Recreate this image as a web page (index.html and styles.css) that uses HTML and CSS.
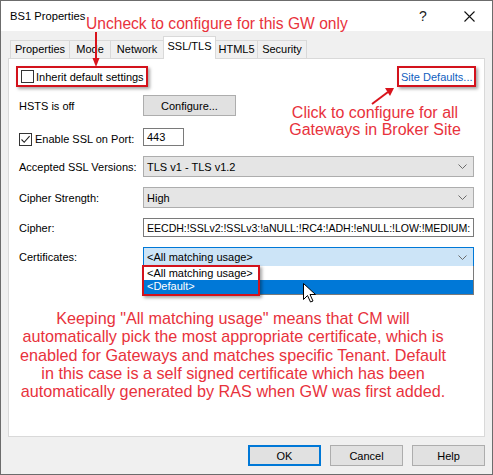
FILE: index.html
```html
<!DOCTYPE html>
<html>
<head>
<meta charset="utf-8">
<link rel="stylesheet" href="styles.css">
</head>
<body>
<div class="window">
  <div class="titlebar">
    <span class="title">BS1 Properties</span>
    <span class="tb-btn help">?</span>
    <span class="tb-btn"><svg width="11" height="11" viewBox="0 0 11 11"><path d="M0.5 0.5 L10.5 10.5 M10.5 0.5 L0.5 10.5" stroke="#111" stroke-width="1.1" fill="none"/></svg></span>
  </div>
  <div class="tabs">
    <div class="tab t-props">Properties</div>
    <div class="tab t-mode">Mode</div>
    <div class="tab t-net">Network</div>
    <div class="tab t-ssl active">SSL/TLS</div>
    <div class="tab t-html">HTML5</div>
    <div class="tab t-sec">Security</div>
  </div>
  <div class="panel">
    <div class="row-top">
      <div class="redbox inherit"><span class="cb"></span>Inherit default settings</div>
      <div class="redbox sitedef"><span class="link">Site Defaults...</span></div>
    </div>
    <div class="row hsts">
      <span class="label">HSTS is off</span>
      <div><span class="btn configure">Configure...</span></div>
    </div>
    <div class="row ssl">
      <span class="label"><span class="cb checked"><svg width="11" height="11" viewBox="0 0 11 11"><path d="M1.5 5.5 L4.2 8.3 L9.6 2.2" stroke="#222" stroke-width="1.1" fill="none"/></svg></span>Enable SSL on Port:</span>
      <div><span class="input port">443</span></div>
    </div>
    <div class="row r21">
      <span class="label">Accepted SSL Versions:</span>
      <div class="select"><span>TLS v1 - TLS v1.2</span><svg class="chev" width="9" height="5" viewBox="0 0 9 5"><path d="M0.5 0.5 L4.5 4.5 L8.5 0.5" stroke="#6b6b6b" fill="none"/></svg></div>
    </div>
    <div class="row r21">
      <span class="label">Cipher Strength:</span>
      <div class="select"><span>High</span><svg class="chev" width="9" height="5" viewBox="0 0 9 5"><path d="M0.5 0.5 L4.5 4.5 L8.5 0.5" stroke="#6b6b6b" fill="none"/></svg></div>
    </div>
    <div class="row r19">
      <span class="label">Cipher:</span>
      <div class="input cipher">EECDH:!SSLv2:!SSLv3:!aNULL:!RC4:!ADH:!eNULL:!LOW:!MEDIUM:</div>
    </div>
    <div class="row r20">
      <span class="label">Certificates:</span>
      <div class="select focus"><span>&lt;All matching usage&gt;</span><svg class="chev" width="9" height="5" viewBox="0 0 9 5"><path d="M0.5 0.5 L4.5 4.5 L8.5 0.5" stroke="#6b6b6b" fill="none"/></svg>
        <div class="dropdown">
          <div class="item">&lt;All matching usage&gt;</div>
          <div class="item sel">&lt;Default&gt;</div>
          <div class="dd-box"></div>
        </div>
      </div>
    </div>
    <p class="note">Keeping "All matching usage" means that CM will automatically pick the most appropriate certificate, which is enabled for Gateways and matches specific Tenant. Default in this case is a self signed certificate which has been automatically generated by RAS when GW was first added.</p>
  </div>
  <div class="footer">
    <span class="btn fbtn default">OK</span>
    <span class="btn fbtn">Cancel</span>
    <span class="btn fbtn">Help</span>
  </div>

  <div class="ann ann-title">Uncheck to configure for this GW only</div>
  <div class="ann ann-click">Click to configure for all<br>Gateways in Broker Site</div>
  <svg class="overlay" width="493" height="475" viewBox="0 0 493 475">
    <path d="M96 32 L96 60" stroke="#d9141c" stroke-width="2" fill="none"/>
    <path d="M92.5 58 L96 67 L99.5 58 Z" fill="#d9141c"/>
    <path d="M372 104 L388 92" stroke="#d9141c" stroke-width="2" fill="none"/>
    <path d="M385 88 L394 88 L390 96 Z" fill="#d9141c"/>
    <path d="M303.5 283.5 L303.5 299.5 L307.5 295.5 L310.5 302 L313 301 L310 294.5 L315.5 294.5 Z" fill="#fff" stroke="#000" stroke-width="1" stroke-linejoin="round"/>
  </svg>
</div>
</body>
</html>
```
FILE: styles.css
```css
body {
  margin: 0;
  width: 493px;
  height: 475px;
  overflow: hidden;
  font-family: "Liberation Sans", Arial, sans-serif;
  font-size: 11px;
  color: #000;
}
.window {
  position: relative;
  box-sizing: border-box;
  width: 493px;
  height: 475px;
  border: 1px solid #6c6c6c;
  background: #f0f0f0;
  display: flex;
  flex-direction: column;
}
.titlebar {
  height: 30px;
  flex: none;
  background: #fff;
  display: flex;
  align-items: center;
  padding-left: 9px;
  font-size: 11.2px;
}
.title { flex: 1; margin-top: -1px; }
.tb-btn {
  width: 46px;
  height: 30px;
  display: flex;
  align-items: center;
  justify-content: center;
}
.help { font-size: 14px; color: #222; }
.tabs {
  height: 27px;
  flex: none;
  display: flex;
  align-items: flex-end;
  padding-left: 9px;
}
.tab {
  height: 18px;
  box-sizing: border-box;
  border: 1px solid #d9d9d9;
  border-bottom: none;
  margin-right: -1px;
  line-height: 17px;
  text-align: center;
  background: #f0f0f0;
  flex: none;
}
.t-props { width: 60px; }
.t-mode { width: 42px; }
.t-net { width: 54px; }
.t-ssl { width: 53px; }
.t-html { width: 43px; }
.t-sec { width: 50px; }
.tab.active {
  position: relative;
  z-index: 2;
  height: 23px;
  margin-bottom: -1px;
  line-height: 19px;
  background: #fff;
}
.panel {
  position: relative;
  z-index: 1;
  height: 379px;
  flex: none;
  box-sizing: border-box;
  margin: 0 7px;
  background: #fff;
  border: 1px solid #d9d9d9;
  padding: 0 10px 0 7px;
}
.row-top {
  margin-top: 7px;
  margin-right: -2px;
  height: 21px;
  display: flex;
  justify-content: space-between;
}
.redbox {
  box-sizing: border-box;
  height: 21px;
  border: 2px solid #d3121c;
  box-shadow: 2px 2px 3px rgba(0,0,0,0.35);
  display: flex;
  align-items: center;
}
.inherit { width: 132px; padding-left: 3px; }
.sitedef { width: 79px; padding-left: 2px; }
.link { color: #1060c0; }
.cb {
  box-sizing: border-box;
  width: 13px;
  height: 13px;
  border: 1px solid #333;
  background: #fff;
  margin-right: 2px;
  display: inline-flex;
  align-items: center;
  justify-content: center;
  flex: none;
}
.row {
  margin-left: 3px;
  display: grid;
  grid-template-columns: 124px 1fr;
  align-items: center;
}
.hsts { margin-top: 8px; height: 21px; }
.ssl { margin-top: 12px; height: 18px; }
.ssl .label { display: flex; align-items: center; margin-top: 4px; }
.ssl .label .cb { margin-right: 3px; }
.r21 { margin-top: 10px; height: 21px; }
.r19 { margin-top: 10px; height: 19px; }
.r20 { margin-top: 10px; height: 20px; }
.label { white-space: nowrap; }
.btn {
  box-sizing: border-box;
  display: inline-flex;
  align-items: center;
  justify-content: center;
  background: #e1e1e1;
  border: 1px solid #adadad;
}
.configure { width: 93px; height: 21px; }
.input {
  box-sizing: border-box;
  border: 1px solid #7a7a7a;
  background: #fff;
  display: flex;
  align-items: center;
  padding-left: 3px;
  white-space: nowrap;
  overflow: hidden;
}
.port { width: 41px; height: 18px; }
.cipher { height: 19px; font-size: 10.6px; letter-spacing: -0.05px; }
.select {
  position: relative;
  box-sizing: border-box;
  height: 100%;
  background: #e5e5e5;
  border: 1px solid #adadad;
  display: flex;
  align-items: center;
  justify-content: space-between;
  padding: 0 6px 0 3px;
}
.select.focus {
  background: #cce4f7;
  border-color: #0078d7;
}
.dropdown {
  position: absolute;
  left: -1px;
  right: -1px;
  top: 100%;
  box-sizing: border-box;
  height: 29px;
  background: #fff;
  border: 1px solid #7a7a7a;
  border-top: none;
  padding-top: 1px;
}
.item {
  height: 13px;
  line-height: 13px;
  padding-left: 3px;
}
.item.sel {
  height: 14px;
  background: #0078d7;
  color: #fff;
}
.dd-box {
  position: absolute;
  left: -2px;
  top: -1px;
  width: 118px;
  height: 31px;
  box-sizing: border-box;
  border: 2px solid #d3121c;
  box-shadow: 2px 2px 3px rgba(0,0,0,0.35);
}
.note {
  margin: 42px 24px 0 0;
  text-align: center;
  color: #e8323c;
  font-size: 16.2px;
  line-height: 18.3px;
}
.footer {
  flex: none;
  display: flex;
  justify-content: flex-end;
  gap: 9px;
  padding: 8px 7px 0 0;
}
.fbtn { width: 73px; height: 21px; }
.fbtn.default {
  border-color: #0078d7;
  box-shadow: inset 0 0 0 1px #0078d7;
}
.ann {
  position: absolute;
  color: #e8323c;
  white-space: nowrap;
  z-index: 5;
}
.ann-title {
  left: 85px;
  top: 14px;
  font-size: 15.6px;
  line-height: 18px;
}
.ann-click {
  left: 274px;
  width: 200px;
  top: 103px;
  text-align: center;
  font-size: 16px;
  line-height: 17px;
}
.overlay {
  position: absolute;
  left: -1px;
  top: -1px;
  z-index: 6;
  pointer-events: none;
}
```
